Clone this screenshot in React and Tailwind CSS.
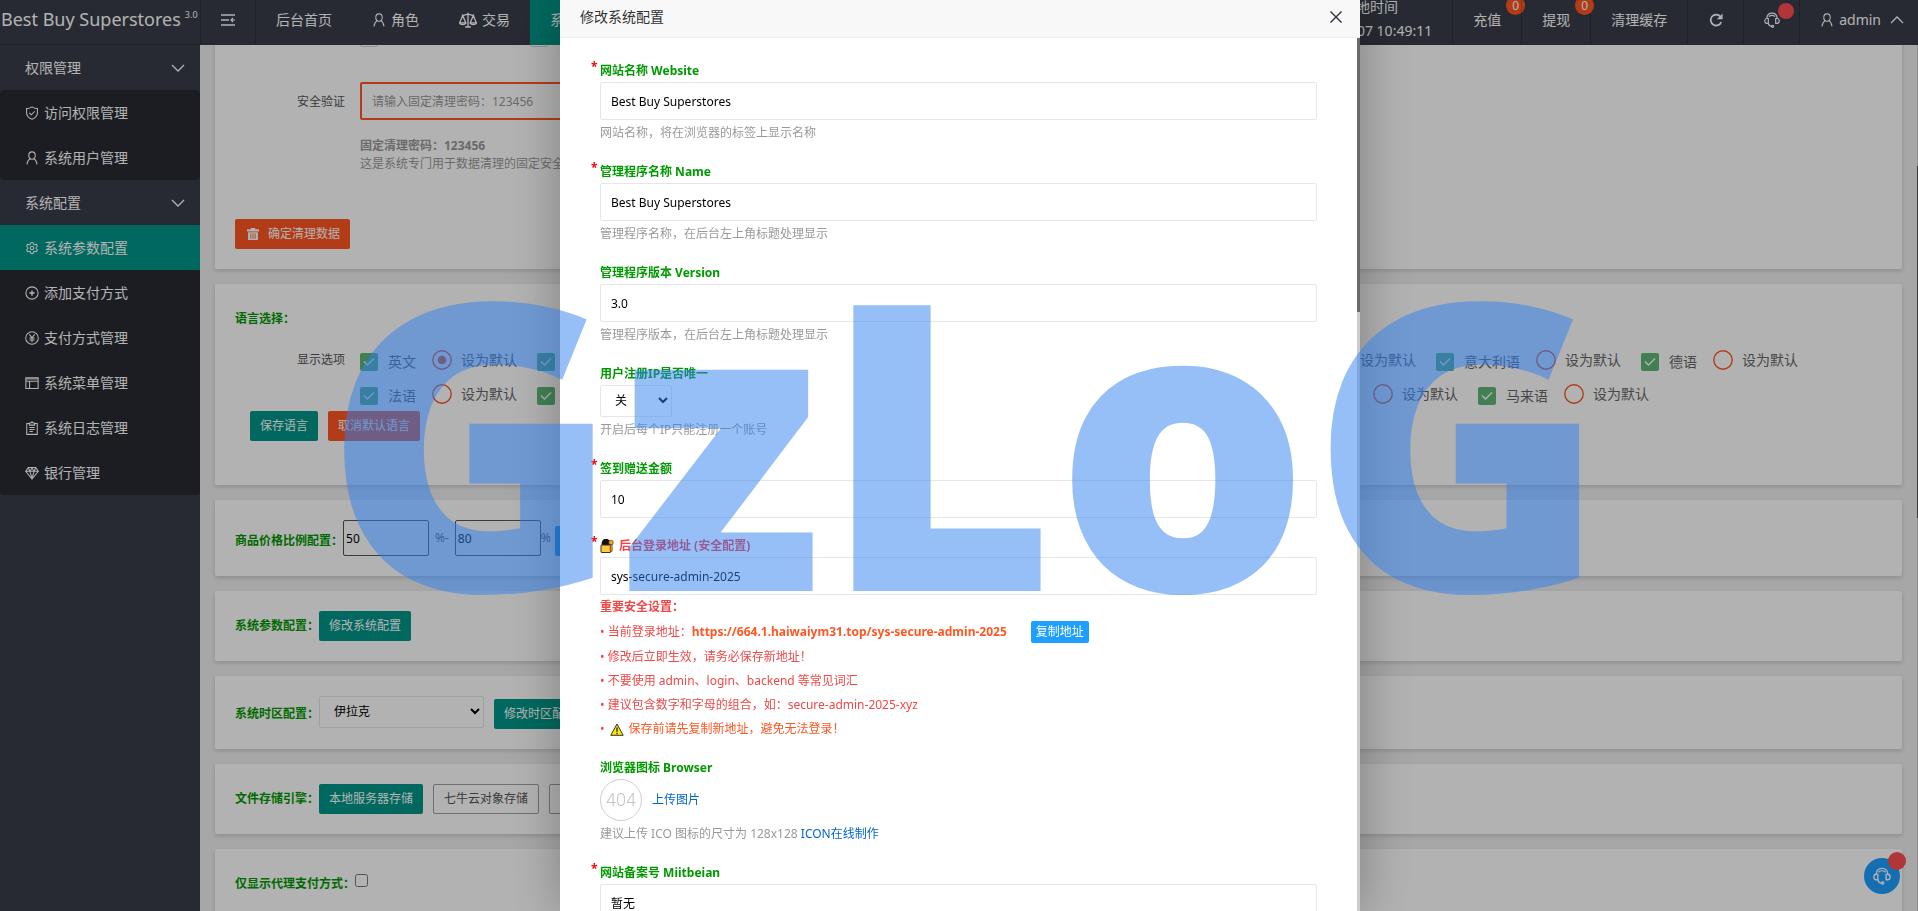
import clsx from 'clsx';
import { Settings } from 'lucide-react';

const MENU_GROUPS = [
  {
    title: '权限管理',
    items: [
      { label: '访问权限管理', icon: 'shield' },
      { label: '系统用户管理', icon: 'user' },
    ],
  },
  {
    title: '系统配置',
    items: [
      { label: '系统参数配置', icon: 'gear', active: true },
      { label: '添加支付方式', icon: 'plus' },
      { label: '支付方式管理', icon: 'yen' },
      { label: '系统菜单管理', icon: 'window' },
      { label: '系统日志管理', icon: 'clipboard' },
      { label: '银行管理', icon: 'diamond' },
    ],
  },
];

const LANGUAGES = [
  '英文', '中文', '日语', '韩语', '俄语', '西班牙', '意大利语', '德语',
  '法语', '阿拉伯语', '印尼语', '越南语', '泰语', '印度', '马来语',
];

const ICON_PATHS = {
  shield: (
    <>
      <path d="M8 1c1.600 1.200 3.800 1.900 6.200 2v4.700c0 3.500-2.300 5.900-6.200 7.500-3.900-1.600-6.200-4-6.200-7.500V3C4.200 2.900 6.400 2.200 8 1z" />
      <path d="M5 7.800l2.200 2.200 4-4" />
    </>
  ),
  user: (
    <>
      <ellipse cx="8" cy="5.200" rx="3.700" ry="4.200" />
      <path d="M2.300 15.300c.2-3.200 1.500-5.300 3.700-6.600M13.700 15.300c-.2-3.200-1.500-5.300-3.700-6.600" />
    </>
  ),
  plus: (
    <>
      <circle cx="8" cy="8" r="7" />
      <path d="M8 5v6M5 8h6" strokeWidth="1.600" />
    </>
  ),
  yen: (
    <>
      <circle cx="8" cy="8" r="7.200" />
      <path d="M5 3.800l3 4 3-4M8 7.800v5M5 8h6M5 10.300h6" />
    </>
  ),
  window: (
    <>
      <path d="M1 2h14v12.300H1zM1 6h14M5.200 6v8.300" />
      <path d="M1 3.300h14" />
    </>
  ),
  clipboard: (
    <>
      <path d="M4.800 2.800H2v12.500h12V2.800h-2.800" />
      <path d="M5 2.300h1.800L8 .8l1.200 1.500H11v2.400H5zM5 7.500h6M5 9.800h6M5 12h4" />
    </>
  ),
  diamond: (
    <>
      <path d="M3.800 1.800h8.400L15.300 6 8 14.800.7 6zM1.200 6h13.600" />
      <path d="M4 2.300L5.500 6 8 13.500 10.500 6 12 2.300M5.500 6L8 2.500 10.500 6" />
    </>
  ),
  scale: (
    <>
      <path d="M8 1.500v12M5.500 14.200h5M2.500 4C5 4 6 2.800 8 2.800S11 4 13.500 4" />
      <path d="M3.300 4L.6 10.500h5.400zM12.700 4L10 10.500h5.400z" />
      <path d="M.6 10.500c.6 2 4.800 2 5.400 0M10 10.500c.6 2 4.800 2 5.400 0" />
    </>
  ),
  headset: (
    <>
      <path d="M2.800 6.500C3 3.400 5 1.200 8 1.200s5 2.200 5.200 5.300" />
      <path d="M4.300 6.500h-1a2.300 2.300 0 0 0-2.500 2v.8a2.300 2.300 0 0 0 2.500 2h1zM11.700 6.500h1a2.300 2.300 0 0 1 2.500 2v.8a2.300 2.300 0 0 1-2.500 2h-1z" />
      <path d="M4.800 4.600c1.800-1.500 4.600-1.500 6.400 0M4.300 11.300c.5 1.900 1.500 2.800 3.200 3" />
      <circle cx="8.600" cy="14.300" r="1" />
    </>
  ),
};

function Icon({ name, className }) {
  if (name === 'gear') return <Settings className={clsx('shrink-0', className)} strokeWidth={1.8} aria-hidden="true" />;

  return (
    <svg
      viewBox="0 0 16 16"
      className={clsx('shrink-0', className)}
      fill="none"
      stroke="currentColor"
      strokeWidth="1.200"
      aria-hidden="true"
    >
      {ICON_PATHS[name]}
    </svg>
  );
}

function Chevron({ up, className }) {
  return (
    <svg viewBox="0 0 14 8" className={className} fill="none" stroke="currentColor" strokeWidth="1.300" aria-hidden="true">
      <path d={up ? 'M1 7l6-6 6 6' : 'M1 1l6 6 6-6'} />
    </svg>
  );
}

function Sidebar() {
  return (
    <aside className="w-[200px] shrink-0 bg-[#393D49] text-sm text-white">
      {MENU_GROUPS.map((group) => (
        <nav key={group.title} aria-label={group.title}>
          <button type="button" className="flex h-[45px] w-full items-center justify-between pr-[15px] pl-[25px]">
            {group.title}
            <Chevron className="w-3.5" />
          </button>
          <ul className="rounded-sm bg-black/30">
            {group.items.map((item) => (
              <li key={item.label}>
                <a
                  href="#"
                  className={clsx('flex h-[45px] items-center gap-[5px] pl-[25px]', item.active && 'bg-[#009688]')}
                >
                  <Icon name={item.icon} className="size-3.5" />
                  {item.label}
                </a>
              </li>
            ))}
          </ul>
        </nav>
      ))}
    </aside>
  );
}

function NavItem({ icon, label, active }) {
  return (
    <a href="#" className={clsx('flex items-center gap-[5px] px-5 pb-[5px]', active && 'bg-[#009688]')}>
      {icon && <Icon name={icon} className={icon === 'scale' ? 'size-[18px]' : 'size-3.5'} />}
      {label}
    </a>
  );
}

function CountLink({ label }) {
  return (
    <a href="#" className="relative flex items-center border-l border-black/20 px-5 pb-[5px]">
      {label}
      <span className="absolute -top-1 -right-1 flex size-[19px] items-center justify-center rounded-full bg-[#FF5722] text-xs">
        0
      </span>
    </a>
  );
}

function Header() {
  return (
    <header className="relative flex h-[45px] shrink-0 bg-[#393D49] text-sm whitespace-nowrap text-white">
      <div className="flex w-[200px] shrink-0 items-center border-b border-black/20 pb-1.5 pl-px text-lg">
        Best Buy Superstores
        <sup className="ml-1 text-[9px]">3.0</sup>
      </div>
      <button type="button" aria-label="收起菜单" className="flex w-14 items-center justify-center border-x border-black/20 pb-[5px]">
        <svg viewBox="0 0 14 12" className="w-3.5" fill="none" stroke="currentColor" strokeWidth="1.600" aria-hidden="true">
          <path d="M0 1h14M0 6h8M0 11h14" />
          <path d="M14 6h-4M12 4l-2 2 2 2" strokeWidth="1.200" />
        </svg>
      </button>
      <nav className="flex" aria-label="主导航">
        <NavItem label="后台首页" />
        <NavItem icon="user" label="角色" />
        <NavItem icon="scale" label="交易" />
        <NavItem label="系统" active />
      </nav>
      <div className="ml-auto flex">
        <div className="-mt-[5px] px-5 leading-6">
          <p>伊拉克当地时间</p>
          <p>2025-12-07 10:49:11</p>
        </div>
        <CountLink label="充值" />
        <CountLink label="提现" />
        <a href="#" className="flex items-center border-l border-black/20 px-5 pb-[5px]">
          清理缓存
        </a>
        <button type="button" aria-label="刷新" className="flex w-14 items-center justify-center border-l border-black/20 pb-[5px]">
          <svg viewBox="0 0 16 16" className="size-3.5" fill="none" stroke="currentColor" strokeWidth="2" aria-hidden="true">
            <path d="M13 4.200A6.200 6.200 0 1 0 14 10.200" />
            <path d="M15.500.5v6.500H9z" fill="currentColor" stroke="none" />
          </svg>
        </button>
        <button type="button" aria-label="在线客服" className="relative flex w-14 items-center justify-center border-l border-black/20 pb-[5px]">
          <Icon name="headset" className="size-4" />
          <span className="absolute top-[3px] right-[5px] size-4 rounded-full bg-[#FF4D4F]" />
        </button>
        <a href="#" className="flex items-center gap-[5px] border-l border-black/20 pr-3.5 pb-[5px] pl-5">
          <Icon name="user" className="size-3.5" />
          admin
          <Chevron up className="ml-1 w-3.5" />
        </a>
      </div>
    </header>
  );
}

function Card({ className, children }) {
  return <section className={clsx('rounded-xs bg-white shadow-[0_2px_4px_rgba(0,0,0,0.15)]', className)}>{children}</section>;
}

function CardLabel({ htmlFor, children }) {
  const Tag = htmlFor ? 'label' : 'span';
  return (
    <Tag htmlFor={htmlFor} className="leading-[30px] font-bold text-[#009900]">
      {children}
    </Tag>
  );
}

function Button({ tone = 'teal', className, children }) {
  const tones = {
    teal: 'bg-[#009688] text-white',
    orange: 'bg-[#FF5722] text-white',
    blue: 'bg-[#1E9FFF] text-white',
    plain: 'border border-[#a0a0a0] bg-white text-[#555]',
  };
  return (
    <button type="button" className={clsx('flex h-[30px] items-center rounded-xs px-2.5', tones[tone], className)}>
      {children}
    </button>
  );
}

function Select({ id, value, className }) {
  return (
    <span className={clsx('relative block', className)}>
      <select id={id} className="h-8 w-full appearance-none rounded-xs border border-[#e6e6e6] bg-white px-3.5 text-black">
        <option>{value}</option>
      </select>
      <svg
        viewBox="0 0 10 7"
        className="pointer-events-none absolute top-3 right-1 w-2.5 text-black"
        fill="none"
        stroke="currentColor"
        strokeWidth="2"
        aria-hidden="true"
      >
        <path d="M1 1l4 4 4-4" />
      </svg>
    </span>
  );
}

function LanguageOption({ name, isDefault }) {
  return (
    <div className="flex h-[34px] items-center text-sm text-[#666]">
      <label className="flex items-center pt-1">
        <span className="relative mr-2.5 block size-[18px]">
          <input type="checkbox" defaultChecked className="block size-[18px] appearance-none rounded-xs bg-[#5FB878]" />
          <svg viewBox="0 0 18 18" className="pointer-events-none absolute inset-0" fill="none" stroke="#fff" strokeWidth="1.300" aria-hidden="true">
            <path d="M4 8.500l3.500 3.500L14 5.500" />
          </svg>
        </span>
        {name}
      </label>
      <label className="ml-4 flex items-center gap-[9px]">
        <span className="relative block size-5">
          <input type="radio" name="default-language" defaultChecked={isDefault} className="peer block size-5 appearance-none rounded-full" />
          <svg viewBox="0 0 20 20" className="pointer-events-none absolute inset-0 text-[#FF5722] peer-checked:[&>circle:last-child]:opacity-100" aria-hidden="true">
            <circle cx="10" cy="10" r="9.200" fill="none" stroke="currentColor" strokeWidth="1.400" />
            <circle cx="10" cy="10" r="4.300" fill="currentColor" className="opacity-0" />
          </svg>
        </span>
        设为默认
      </label>
    </div>
  );
}

function SettingsPage() {
  return (
    <main className="flex min-w-0 flex-1 overflow-hidden bg-[#efefef]">
      <div className="-mt-4 flex min-w-0 flex-1 flex-col gap-[15px] px-[15px] text-xs">
        <Card className="px-5 pb-5">
          <div className="flex gap-[152px] pl-[125px]">
            <input type="checkbox" aria-label="清理用户" className="size-[18px] appearance-none rounded-xs border border-[#d2d2d2]" />
            <input type="checkbox" aria-label="清理订单" className="size-[18px] appearance-none rounded-xs border border-[#d2d2d2]" />
          </div>
          <div className="mt-[35px] flex">
            <label htmlFor="verify" className="w-[125px] shrink-0 pr-[15px] text-right leading-10 text-[#555]">
              安全验证
            </label>
            <div className="flex-1 leading-[18px] text-[#999]">
              <input
                id="verify"
                placeholder="请输入固定清理密码：123456"
                className="mb-[17px] block h-[38px] w-[400px] rounded-xs border-2 border-[#FF5722] px-2.5 placeholder:text-[#999]"
              />
              <p className="font-bold">固定清理密码：123456</p>
              <p>这是系统专门用于数据清理的固定安全密码</p>
            </div>
          </div>
          <Button tone="orange" className="mt-[46px] gap-[9px]">
            <svg viewBox="0 0 14 14" className="ml-0.5 size-3" fill="currentColor" aria-hidden="true">
              <path d="M4.500 0h5v1.500H14V4H0V1.500h4.500zM1.200 5h11.600v9H1.200zM4 6.300v6.200h1V6.300zm2.500 0v6.200h1V6.300zm2.500 0v6.200h1V6.300z" fillRule="evenodd" />
            </svg>
            确定清理数据
          </Button>
        </Card>

        <Card className="px-5 pt-5 pb-11">
          <CardLabel>语言选择：</CardLabel>
          <div className="mt-[9px] flex">
            <span className="w-[125px] shrink-0 pr-[15px] text-right leading-[34px] text-[#555]">显示选项</span>
            <div className="flex flex-wrap gap-x-5">
              {LANGUAGES.map((name, index) => (
                <LanguageOption key={name} name={name} isDefault={index === 0} />
              ))}
            </div>
          </div>
          <div className="flex gap-2.5 pl-[15px]">
            <Button>保存语言</Button>
            <Button tone="orange">取消默认语言</Button>
          </div>
        </Card>

        <Card className="flex items-end p-5 text-[#666]">
          <CardLabel htmlFor="ratio-min">商品价格比例配置：</CardLabel>
          <input id="ratio-min" defaultValue="50" className="h-9 w-[86px] rounded-xs border border-[#555] px-0.5 text-black" />
          <span className="mx-1.5 self-center">%-</span>
          <input aria-label="最高比例" defaultValue="80" className="h-9 w-[86px] rounded-xs border border-[#555] px-0.5 text-black" />
          <span className="mr-1 self-center">%</span>
          <Button tone="blue">保存</Button>
        </Card>

        <Card className="flex items-end p-5">
          <CardLabel>系统参数配置：</CardLabel>
          <Button>修改系统配置</Button>
        </Card>

        <Card className="flex items-end p-5">
          <CardLabel htmlFor="timezone">系统时区配置：</CardLabel>
          <Select id="timezone" value="伊拉克" className="mr-2.5 mb-px w-[165px]" />
          <Button>修改时区配置</Button>
        </Card>

        <Card className="flex items-end p-5">
          <CardLabel>文件存储引擎：</CardLabel>
          <div className="flex gap-2.5">
            <Button>本地服务器存储</Button>
            <Button tone="plain">七牛云对象存储</Button>
            <Button tone="plain">阿里云OSS存储</Button>
          </div>
        </Card>

        <Card className="flex items-start p-5 pb-20">
          <CardLabel htmlFor="agent-only">仅显示代理支付方式：</CardLabel>
          <input id="agent-only" type="checkbox" className="mt-[5px] size-[13px]" />
        </Card>
      </div>
      <div className="w-px bg-[#ccc] pt-[121px]">
        <div className="h-[352px] bg-[#555]" />
      </div>
    </main>
  );
}

function Field({ id, label, required, hint, last, children }) {
  return (
    <div className={last ? 'mb-4' : 'mb-[17px]'}>
      <label htmlFor={id} className="relative flex h-[22px] items-center gap-[5px] font-bold text-[#009900]">
        {required && <span className="absolute -top-px -left-[9px] text-[#FF0000]">*</span>}
        {label}
      </label>
      {children}
      {hint && <p className="pt-0.5 leading-[22px] text-[#999]">{hint}</p>}
    </div>
  );
}

function TextInput({ id, value }) {
  return (
    <input
      id={id}
      defaultValue={value}
      className="block h-[38px] w-full rounded-xs border border-[#e6e6e6] bg-white px-2.5 text-black"
    />
  );
}

function LockIcon() {
  return (
    <svg viewBox="0 0 14 14" className="size-3.5" aria-hidden="true">
      <path d="M2.500 7V4a3.500 3.500 0 0 1 7 0v3" fill="#111" stroke="#111" strokeWidth="1.600" />
      <rect x="1" y="6" width="9.500" height="7.500" rx="0.500" fill="#FFC83D" stroke="#333" />
      <circle cx="11" cy="3.500" r="2.300" fill="#FFA000" stroke="#333" strokeWidth="0.600" />
      <path d="M10.200 5.500h2v6.500l-1 1-1-1z" fill="#FFA000" stroke="#333" strokeWidth="0.600" />
    </svg>
  );
}

function WarningIcon() {
  return (
    <svg viewBox="0 0 14 13" className="w-3.5" aria-hidden="true">
      <path d="M7 1l6.200 11.300H.8z" fill="#FFE600" stroke="#333" />
      <path d="M7 4.500v4.300M7 9.800v1.400" stroke="#222" strokeWidth="1.300" />
    </svg>
  );
}

function ConfigDialog() {
  return (
    <div className="fixed inset-0 flex justify-center bg-black/30 pl-0.5">
      <div
        role="dialog"
        aria-label="修改系统配置"
        className="flex h-full w-[800px] flex-col bg-white text-xs shadow-[1px_1px_50px_rgba(0,0,0,0.3)]"
      >
        <div className="flex h-[38px] shrink-0 items-center justify-between border-b border-[#eee] bg-[#f8f8f8] px-5 pb-1 text-sm text-[#333]">
          <h2>修改系统配置</h2>
          <button type="button" aria-label="关闭" className="-mr-0.5">
            <svg viewBox="0 0 12 12" className="size-3" fill="none" stroke="#2E2D3C" strokeWidth="1.400" aria-hidden="true">
              <path d="M.5.500l11 11M11.500.500l-11 11" />
            </svg>
          </button>
        </div>
        <div className="flex min-h-0 flex-1">
          <form className="min-w-0 flex-1 overflow-hidden px-10 pt-[22px]">
            <Field id="site-name" label="网站名称 Website" required hint="网站名称，将在浏览器的标签上显示名称">
              <TextInput id="site-name" value="Best Buy Superstores" />
            </Field>
            <Field id="app-name" label="管理程序名称 Name" required hint="管理程序名称，在后台左上角标题处理显示">
              <TextInput id="app-name" value="Best Buy Superstores" />
            </Field>
            <Field id="app-version" label="管理程序版本 Version" hint="管理程序版本，在后台左上角标题处理显示">
              <TextInput id="app-version" value="3.0" />
            </Field>
            <Field id="unique-ip" label="用户注册IP是否唯一" hint="开启后每个IP只能注册一个账号">
              <Select id="unique-ip" value="关" className="w-[72px]" />
            </Field>
            <Field id="sign-bonus" label="签到赠送金额" required>
              <TextInput id="sign-bonus" value="10" />
            </Field>
            <Field
              id="login-path"
              required
              last
              label={
                <>
                  <LockIcon />
                  <span className="text-[#FF3B3B]">后台登录地址 (安全配置)</span>
                </>
              }
            >
              <TextInput id="login-path" value="sys-secure-admin-2025" />
              <div className="leading-6 text-[#F04848]">
                <p className="font-bold">重要安全设置：</p>
                <p className="flex h-[26px] items-center">
                  • 当前登录地址：
                  <strong className="mr-6 text-[#FF5722]">https://664.1.haiwaiym31.top/sys-secure-admin-2025</strong>
                  <button type="button" className="h-[22px] rounded-xs bg-[#1E9FFF] px-[5px] leading-[22px] text-white">
                    复制地址
                  </button>
                </p>
                <p>• 修改后立即生效，请务必保存新地址！</p>
                <p>• 不要使用 admin、login、backend 等常见词汇</p>
                <p>• 建议包含数字和字母的组合，如：secure-admin-2025-xyz</p>
                <p className="flex items-center gap-[5px]">
                  • <WarningIcon />
                  <span className="text-[#FF5722]">保存前请先复制新地址，避免无法登录！</span>
                </p>
              </div>
            </Field>
            <Field
              label="浏览器图标 Browser"
              hint={
                <>
                  建议上传 ICO 图标的尺寸为 128x128{' '}
                  <a href="#" className="text-[#0066CC]">
                    ICON在线制作
                  </a>
                </>
              }
            >
              <div className="flex items-center gap-2.5">
                <span className="flex size-[42px] items-center justify-center rounded-full border border-[#d0cccc] font-['Roboto',sans-serif] text-lg font-light text-[#c8c4c4]">
                  404
                </span>
                <a href="#" className="text-[#0066CC]">
                  上传图片
                </a>
              </div>
            </Field>
            <Field id="miitbeian" label="网站备案号 Miitbeian" required>
              <TextInput id="miitbeian" value="暂无" />
            </Field>
          </form>
          <div className="w-[3px] bg-[#ccc]">
            <div className="h-[274px] bg-[#6a6a6a]" />
          </div>
        </div>
      </div>
    </div>
  );
}

export default function App() {
  return (
    <div className="flex h-screen flex-col overflow-hidden font-['Noto_Sans','Noto_Sans_CJK_SC',sans-serif]">
      <Header />
      <div className="flex min-h-0 flex-1">
        <Sidebar />
        <SettingsPage />
      </div>
      <button
        type="button"
        aria-label="联系客服"
        className="fixed right-[18px] bottom-[17px] flex size-9 items-center justify-center rounded-full bg-[#1E9FFF] text-white"
      >
        <Icon name="headset" className="size-[18px]" />
        <span className="absolute -top-1.5 -right-1.5 size-[18px] rounded-full bg-[#FF4D4F]" />
      </button>
      <ConfigDialog />
      <div className="pointer-events-none fixed inset-0 flex items-center justify-center pb-10 pl-3 text-[400px] leading-none font-black text-[#2d7ef0]/50">
        GzLoG
      </div>
    </div>
  );
}
